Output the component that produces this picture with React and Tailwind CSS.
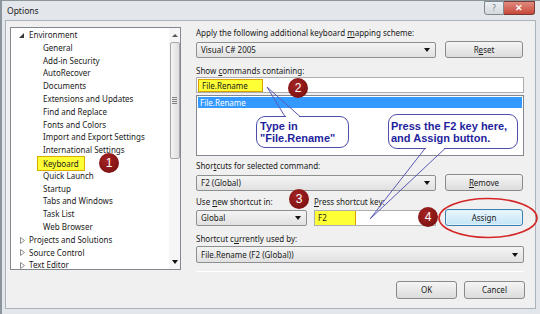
import React from 'react';

const treeItems = [
  { label: 'Environment', level: 0, open: true },
  { label: 'General', level: 1 },
  { label: 'Add-in Security', level: 1 },
  { label: 'AutoRecover', level: 1 },
  { label: 'Documents', level: 1 },
  { label: 'Extensions and Updates', level: 1 },
  { label: 'Find and Replace', level: 1 },
  { label: 'Fonts and Colors', level: 1 },
  { label: 'Import and Export Settings', level: 1 },
  { label: 'International Settings', level: 1 },
  { label: 'Keyboard', level: 1, marked: true },
  { label: 'Quick Launch', level: 1 },
  { label: 'Startup', level: 1 },
  { label: 'Tabs and Windows', level: 1 },
  { label: 'Task List', level: 1 },
  { label: 'Web Browser', level: 1 },
  { label: 'Projects and Solutions', level: 0 },
  { label: 'Source Control', level: 0 },
  { label: 'Text Editor', level: 0 },
];

function Arrow() {
  return (
    <span className="w-0 h-0 border-l-[3px] border-r-[3px] border-t-[4px] border-l-transparent border-r-transparent border-t-[#111]" />
  );
}

function Combo({ children, className = '' }) {
  return (
    <div
      className={`flex items-center justify-between h-[16px] border border-[#8e8f8f] rounded-[2px] bg-linear-to-b from-[#f4f4f4] to-[#e1e1e1] pl-[4px] pr-[5px] ${className}`}
    >
      <span>{children}</span>
      <Arrow />
    </div>
  );
}

function Button({ children, className = '' }) {
  return (
    <div
      className={`flex items-center justify-center border border-[#8a8a8a] rounded-[3px] bg-linear-to-b from-[#f5f5f5] to-[#dcdcdc] ${className}`}
    >
      {children}
    </div>
  );
}

function Badge({ n, className }) {
  return (
    <div
      className={`absolute w-[20px] h-[20px] rounded-full bg-[radial-gradient(circle_at_40%_35%,#a52424,#720c0c)] flex items-center justify-center text-white text-[12px] font-['Liberation_Sans',Arial,sans-serif] ${className}`}
    >
      {n}
    </div>
  );
}

function Expander({ open }) {
  return (
    <span className="w-[10px] flex items-center">
      {open ? (
        <svg width="5" height="5" viewBox="0 0 5 5">
          <polygon points="5,0 5,5 0,5" fill="#3a3a3a" />
        </svg>
      ) : (
        <svg width="5" height="7" viewBox="0 0 5 7" className="ml-[1px]">
          <polygon points="0.5,0.5 4.5,3.5 0.5,6.5" fill="none" stroke="#8c8c8c" strokeWidth="1" />
        </svg>
      )}
    </span>
  );
}

function Tree() {
  return (
    <div className="w-[171px] h-[243px] bg-white border border-[#828790] flex">
      <div className="flex-1 pt-[1px] overflow-hidden">
        {treeItems.map((it) => (
          <div
            key={it.label}
            className={`h-[12.8px] leading-[12.8px] whitespace-nowrap flex items-center ${
              it.level === 0 ? 'pl-[8px]' : 'pl-[32px]'
            }`}
          >
            {it.level === 0 && <Expander open={it.open} />}
            {it.marked ? (
              <span className="bg-[#ffff36] border border-[#d9b000] px-[5px] -ml-[6px] leading-[13px]">
                {it.label}
              </span>
            ) : (
              <span>{it.label}</span>
            )}
          </div>
        ))}
      </div>
      <div className="w-[11px] bg-[#f6f6f6] flex flex-col items-center">
        <div className="h-[14px] flex items-center justify-center">
          <span className="w-0 h-0 border-l-[3px] border-r-[3px] border-b-[3px] border-l-transparent border-r-transparent border-b-[#555]" />
        </div>
        <div className="w-[10px] h-[117px] border border-[#a8a8a8] rounded-[2px] bg-linear-to-r from-[#f4f4f4] to-[#dedede] flex flex-col items-center justify-center gap-[1px]">
          <span className="w-[5px] h-px bg-[#808080]" />
          <span className="w-[5px] h-px bg-[#808080]" />
          <span className="w-[5px] h-px bg-[#808080]" />
          <span className="w-[5px] h-px bg-[#808080]" />
        </div>
        <div className="flex-1" />
        <div className="h-[14px] flex items-center justify-center">
          <Arrow />
        </div>
      </div>
    </div>
  );
}

function RightPanel() {
  return (
    <div className="ml-[15px] w-[328px] flex flex-col">
      <div className="h-[12px] leading-[12px]">
        Apply the following additional keyboard <u>m</u>apping scheme:
      </div>
      <div className="mt-[2px] h-[17px] flex items-center gap-[9px]">
        <Combo className="w-[240px]">Visual C# 2005</Combo>
        <Button className="w-[78px] h-[17px]">
          R<u>e</u>set
        </Button>
      </div>
      <div className="mt-[7px] h-[12px] leading-[12px]">
        Show <u>c</u>ommands containing:
      </div>
      <div className="h-[16px] border border-[#abadb3] bg-white flex items-center pl-[1px]">
        <span className="bg-[#ffff36] border border-[#d9a000] w-[65px] h-[13px] leading-[12px] pl-[3px]">
          File.Rename
        </span>
      </div>
      <div className="mt-[2px] h-[61px] border border-[#828790] bg-white pt-[1px] px-[1px]">
        <div className="h-[11px] leading-[11px] bg-[#3399ff] text-white pl-[2px]">File.Rename</div>
      </div>
      <div className="mt-[4px] h-[12px] leading-[12px]">
        Shor<u>t</u>cuts for selected command:
      </div>
      <div className="mt-[2px] h-[17px] flex items-center gap-[9px]">
        <Combo className="w-[240px]">F2 (Global)</Combo>
        <Button className="w-[78px] h-[17px]">
          <u>R</u>emove
        </Button>
      </div>
      <div className="mt-[5px] h-[12px] leading-[12px] flex">
        <span className="w-[118px]">
          Use <u>n</u>ew shortcut in:
        </span>
        <span>
          <u>P</u>ress shortcut key:
        </span>
      </div>
      <div className="mt-[1px] h-[17px] flex items-center">
        <Combo className="w-[111px]">Global</Combo>
        <div className="ml-[7px] w-[122px] h-[16px] border border-[#abadb3] bg-white flex">
          <span className="bg-[#ffff36] border-r border-[#d9a000] w-[41px] leading-[14px] pl-[3px]">F2</span>
        </div>
        <div className="ml-[9px] w-[78px] h-[17px] flex items-center justify-center border border-[#3c7fb1] rounded-[3px] bg-linear-to-b from-[#eaf6fd] to-[#c4e5f6] shadow-[inset_0_0_0_1px_#dff1fb]">
          Assign
        </div>
      </div>
      <div className="mt-[7px] h-[12px] leading-[12px]">
        Shortcut c<u>u</u>rrently used by:
      </div>
      <Combo className="mt-[1px] w-[328px] h-[17px]">File.Rename (F2 (Global))</Combo>
      <div className="mt-[8px] h-px bg-[#d5d5d5] border-b border-white" />
      <div className="mt-[9px] flex justify-end gap-[7px] -mr-[1px]">
        <Button className="w-[61px] h-[18px]">OK</Button>
        <Button className="w-[61px] h-[18px]">Cancel</Button>
      </div>
    </div>
  );
}

export default function App() {
  return (
    <div className="relative w-[540px] h-[314px] overflow-hidden bg-[#e3e6ea] border-l-2 border-t border-[#8c949c] flex flex-col font-['Noto_Sans',sans-serif] text-[8px] text-[#1a1a1a]">
      {/* title bar */}
      <div className="h-[19px] flex items-start">
        <div className="pl-[5px] pt-[4px] text-[8.5px] text-[#222]">Options</div>
        <div className="ml-auto mr-[5px] flex">
          <div className="w-[20px] h-[14px] border border-[#7f8790] rounded-bl-[3px] bg-linear-to-b from-[#eceff2] to-[#d4d9de] flex items-center justify-center text-[8px] text-[#6b7580]">
            ?
          </div>
          <div className="w-[31px] h-[14px] border border-l-0 border-[#7a3a34] rounded-br-[3px] bg-linear-to-b from-[#e08a7e] to-[#c7473a] flex items-center justify-center text-white text-[9px] font-bold">
            ✕
          </div>
        </div>
      </div>
      {/* client area */}
      <div className="ml-[3px] mr-[4px] mb-[5px] flex-1 border border-[#aab2ba] bg-[#f0f0f0] flex pt-[6px] pl-[4px]">
        <Tree />
        <RightPanel />
      </div>

      {/* annotations */}
      <div className="absolute left-[254px] top-[115px] w-[93px] h-[32px] rounded-[9px] border border-[#4e4eaa] bg-white pl-[3px] pt-[3px] font-['Liberation_Sans',Arial,sans-serif] font-bold text-[11px] leading-[12px] text-[#1f1f9c]">
        Type in
        <br />
        "File.Rename"
      </div>
      <div className="absolute left-[386px] top-[113px] w-[130px] h-[35px] rounded-[9px] border border-[#4e4eaa] bg-white pl-[2px] pt-[5px] font-['Liberation_Sans',Arial,sans-serif] font-bold text-[11px] leading-[12px] text-[#1f1f9c] whitespace-nowrap">
        Press the F2 key here,
        <br />
        and Assign button.
      </div>
      <svg className="absolute left-0 top-0 pointer-events-none" width="540" height="314">
        <line x1="284" y1="115.5" x2="297" y2="115.5" stroke="#fff" strokeWidth="1.5" />
        <polyline points="283,115.5 265,86 298,115.5" fill="none" stroke="#5a5ab4" strokeWidth="1" />
        <line x1="424" y1="147.5" x2="442" y2="147.5" stroke="#fff" strokeWidth="1.5" />
        <polyline points="423,147.5 368,218 443,147.5" fill="none" stroke="#5a5ab4" strokeWidth="1" />
        <ellipse cx="486" cy="217" rx="49" ry="19.5" fill="none" stroke="#d42626" strokeWidth="1.6" />
      </svg>
      <Badge n="1" className="left-[97px] top-[152px]" />
      <Badge n="2" className="left-[286px] top-[77px]" />
      <Badge n="3" className="left-[287px] top-[188px]" />
      <Badge n="4" className="left-[416px] top-[206px]" />
    </div>
  );
}
